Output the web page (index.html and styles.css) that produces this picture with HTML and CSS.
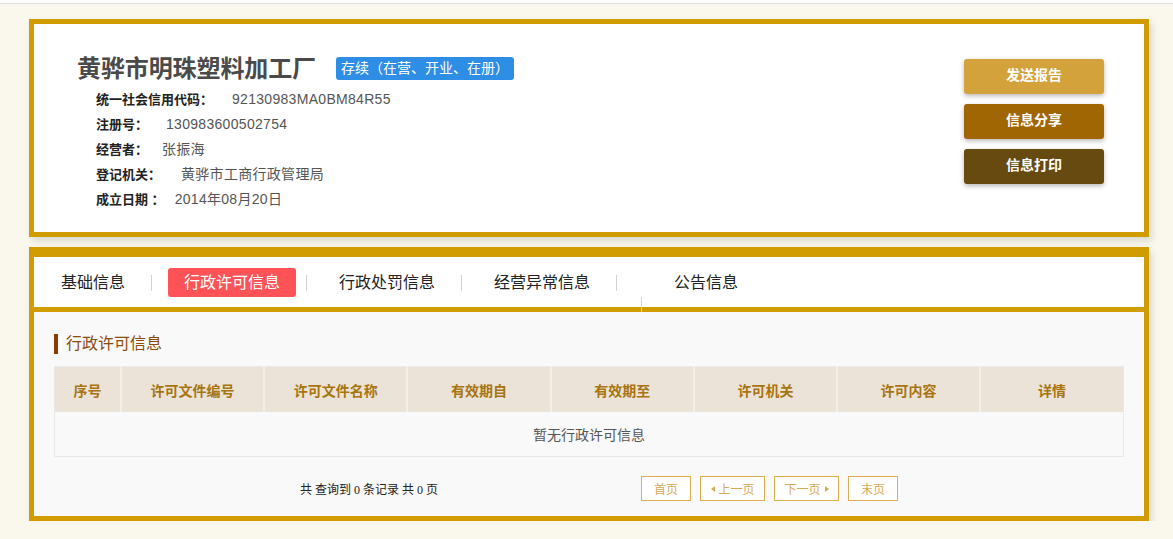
FILE: index.html
```html
<!DOCTYPE html>
<html lang="zh-CN">
	<head>
		<meta charset="utf-8" />
		<title>黄骅市明珠塑料加工厂 - 行政许可信息</title>
		<link rel="stylesheet" href="styles.css">
	</head>
	<body>
		<div class="topbar"></div>

		<div class="page">
			<!-- 企业基本信息 -->
			<div class="card head-card">
				<div class="head-info">
					<div class="title-line">
						<h1 class="company">黄骅市明珠塑料加工厂</h1>
						<span class="status">存续（在营、开业、在册）</span>
					</div>
					<ul class="facts">
						<li><b>统一社会信用代码：</b><span class="val gap-19">92130983MA0BM84R55</span></li>
						<li><b>注册号：</b><span class="val gap-18">130983600502754</span></li>
						<li><b>经营者：</b><span class="val gap-14">张振海</span></li>
						<li><b>登记机关：</b><span class="val gap-20">黄骅市工商行政管理局</span></li>
						<li><b>成立日期 ：</b><span class="val gap-10">2014年08月20日</span></li>
					</ul>
				</div>
				<div class="actions">
					<button class="btn btn-send">发送报告</button>
					<button class="btn btn-share">信息分享</button>
					<button class="btn btn-print">信息打印</button>
				</div>
			</div>

			<!-- 详情 -->
			<div class="card detail-card">
				<div class="tabs">
					<a class="tab">基础信息</a>
					<span class="sep"></span>
					<a class="tab active">行政许可信息</a>
					<span class="sep"></span>
					<a class="tab">行政处罚信息</a>
					<span class="sep"></span>
					<a class="tab">经营异常信息</a>
					<span class="sep sep-last"></span>
					<span class="sep low"></span>
					<a class="tab">公告信息</a>
				</div>

				<div class="panel">
					<h2 class="panel-title">行政许可信息</h2>
					<table class="grid">
						<thead>
							<tr>
								<th class="col-no">序号</th>
								<th>许可文件编号</th>
								<th>许可文件名称</th>
								<th>有效期自</th>
								<th>有效期至</th>
								<th>许可机关</th>
								<th>许可内容</th>
								<th>详情</th>
							</tr>
						</thead>
						<tbody>
							<tr>
								<td colspan="8" class="empty">暂无行政许可信息</td>
							</tr>
						</tbody>
					</table>

					<div class="pager">
						<span class="pager-info">共 查询到 0 条记录 共 0 页</span>
						<div class="pager-btns">
							<a class="pg pg-first">首页</a>
							<a class="pg pg-prev"><i class="tri tri-left"></i>上一页</a>
							<a class="pg pg-next">下一页<i class="tri tri-right"></i></a>
							<a class="pg pg-last">末页</a>
						</div>
					</div>
				</div>
			</div>
		</div>
	</body>
</html>
```

FILE: styles.css
```css
body {
	margin: 0;
	background: #faf7ec;
	font-family: "Liberation Sans", "Noto Sans CJK SC", sans-serif;
	color: #222;
	overflow: hidden;
}

.topbar {
	height: 3px;
	background: #fdfdfb;
	border-bottom: 1px solid #dedede;
}

.page {
	width: 1120px;
	margin: 15px 0 0 29px;
}

.card {
	border: 5px solid #d09c02;
	background: #fff;
	box-shadow: 3px 4px 7px rgba(0, 0, 0, 0.13);
}

/* 头部卡片 */
.head-card {
	display: flex;
	justify-content: space-between;
	height: 208px;
}
.head-info {
	padding: 33px 0 0 43px;
}
.title-line {
	display: flex;
	align-items: center;
	height: 23px;
}
.company {
	margin: 0 20px 0 0;
	font-size: 24px;
	line-height: 23px;
	font-weight: bold;
	color: #4a4a4a;
	letter-spacing: -0.1px;
}
.status {
	display: inline-block;
	height: 23px;
	line-height: 23px;
	padding: 0 5px;
	background: #2e8ee6;
	color: #fff;
	font-size: 14px;
	border-radius: 3px;
}
.facts {
	list-style: none;
	margin: 7px 0 0 19px;
	padding: 0;
}
.facts li {
	height: 25px;
	line-height: 25px;
	font-size: 14px;
	white-space: nowrap;
}
.facts b {
	font-size: 13px;
	color: #222;
}
.facts .val {
	color: #555;
	letter-spacing: 0.3px;
}
.gap-19 { margin-left: 19px; }
.gap-18 { margin-left: 18px; }
.gap-14 { margin-left: 14px; }
.gap-20 { margin-left: 20px; }
.gap-10 { margin-left: 10px; }

.actions {
	display: flex;
	flex-direction: column;
	gap: 10px;
	padding: 35px 40px 0 0;
}
.btn {
	width: 140px;
	height: 35px;
	padding: 0 0 5px;
	border: none;
	border-radius: 3px;
	color: #fff;
	font-family: inherit;
	font-size: 14px;
	font-weight: bold;
	box-shadow: 0 2px 5px rgba(0, 0, 0, 0.28);
}
.btn-send { background: #d3a23a; }
.btn-share { background: #a16604; }
.btn-print { background: #664a10; }

/* 详情卡片 */
.detail-card {
	margin-top: 10px;
}
.tabs {
	display: flex;
	align-items: center;
	height: 50px;
	padding: 0 0 0 11px;
	border-top: 5px solid #d09c02;
	border-bottom: 5px solid #d09c02;
}
.tab {
	padding: 0 16px;
	height: 29px;
	line-height: 29px;
	font-size: 16px;
	color: #222;
	border-radius: 3px;
	margin-top: 1px;
}
.tab.active {
	background: #ff5358;
	color: #fff;
}
.sep {
	width: 1px;
	height: 16px;
	background: #d2d2d2;
	margin: 2px 16px 0 10px;
}
.sep.sep-last {
	margin-right: 0;
}
.sep.low {
	align-self: flex-end;
	height: 15px;
	margin: 0 16px -5px 24px;
	position: relative;
}

.panel {
	background: #f9f9f9;
	padding: 22px 20px 15px;
}
.panel-title {
	margin: 0 0 12px;
	font-size: 16px;
	line-height: 20px;
	font-weight: normal;
	color: #8c4a0c;
	border-left: 4px solid #8a3d00;
	padding-left: 8px;
	height: 20px;
}

.grid {
	width: 100%;
	border-collapse: collapse;
	table-layout: fixed;
	border: 1px solid #e9e9e9;
}
.grid th {
	height: 45px;
	background: #ebe3d8;
	color: #a8740f;
	font-size: 14px;
	font-weight: bold;
	border-left: 2px solid #f3efe8;
	padding: 0;
}
.grid th:first-child {
	border-left: none;
}
.grid .col-no {
	width: 65px;
}
.grid td.empty {
	height: 44px;
	text-align: center;
	font-size: 14px;
	color: #555;
	background: #f9f9f9;
	padding: 0;
}

.pager {
	display: flex;
	align-items: center;
	margin-top: 19px;
	height: 25px;
}
.pager-info {
	margin-left: 246px;
	font-family: "Liberation Serif", "Noto Sans CJK SC", serif;
	font-size: 12px;
	color: #222;
}
.pager-btns {
	display: flex;
	gap: 9px;
	margin-left: 203px;
}
.pg {
	display: flex;
	align-items: center;
	justify-content: center;
	gap: 4px;
	height: 23px;
	border: 1px solid #dbae52;
	background: #fff;
	color: #d5aa55;
	font-size: 12px;
}
.pg-first, .pg-last {
	width: 48px;
}
.pg-prev, .pg-next {
	width: 63px;
}
.tri {
	width: 0;
	height: 0;
	border-top: 3px solid transparent;
	border-bottom: 3px solid transparent;
}
.tri-left {
	border-right: 4px solid #d5aa55;
}
.tri-right {
	border-left: 4px solid #d5aa55;
}
```
